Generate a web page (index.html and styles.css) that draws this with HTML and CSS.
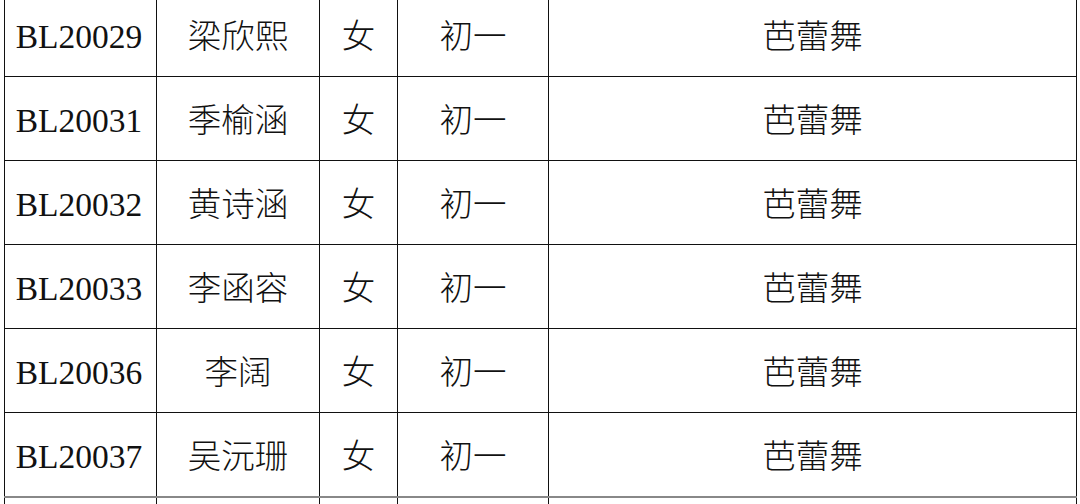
FILE: index.html
```html
<!DOCTYPE html>
<html lang="zh">
<head>
<meta charset="utf-8">
<link rel="stylesheet" href="styles.css">
</head>
<body>
<table class="roster">
<colgroup>
<col class="c-id"><col class="c-name"><col class="c-sex"><col class="c-grade"><col class="c-item">
</colgroup>
<tbody>
<tr><td>BL20029</td><td>梁欣熙</td><td>女</td><td>初一</td><td>芭蕾舞</td></tr>
<tr><td>BL20031</td><td>季榆涵</td><td>女</td><td>初一</td><td>芭蕾舞</td></tr>
<tr><td>BL20032</td><td>黄诗涵</td><td>女</td><td>初一</td><td>芭蕾舞</td></tr>
<tr><td>BL20033</td><td>李函容</td><td>女</td><td>初一</td><td>芭蕾舞</td></tr>
<tr><td>BL20036</td><td>李阔</td><td>女</td><td>初一</td><td>芭蕾舞</td></tr>
<tr><td>BL20037</td><td>吴沅珊</td><td>女</td><td>初一</td><td>芭蕾舞</td></tr>
<tr class="last"><td></td><td></td><td></td><td></td><td></td></tr>
</tbody>
</table>
</body>
</html>
```
FILE: styles.css
```css
html, body {
  margin: 0;
  padding: 0;
  background: #fff;
  overflow: hidden;
}
.roster {
  margin: -8px 0 0 4px;
  border-collapse: collapse;
  table-layout: fixed;
  width: 1072px;
  font-family: "Liberation Serif", "Noto Sans CJK SC", serif;
  font-size: 33.5px;
  color: #111;
}
.c-id { width: 152px; }
.c-name { width: 163px; }
.c-sex { width: 78px; }
.c-grade { width: 151px; }
.c-item { width: 528px; }
.roster td {
  border: 1px solid #111;
  height: 79px;
  padding: 4px 0 0 0;
  text-align: center;
  vertical-align: middle;
  line-height: 1;
  font-weight: 300;
}
.roster tr td:first-child {
  padding-right: 3px;
}
.roster tr.last td {
  border-top: 2px solid #888;
  height: 6px;
  padding: 0;
}
```
